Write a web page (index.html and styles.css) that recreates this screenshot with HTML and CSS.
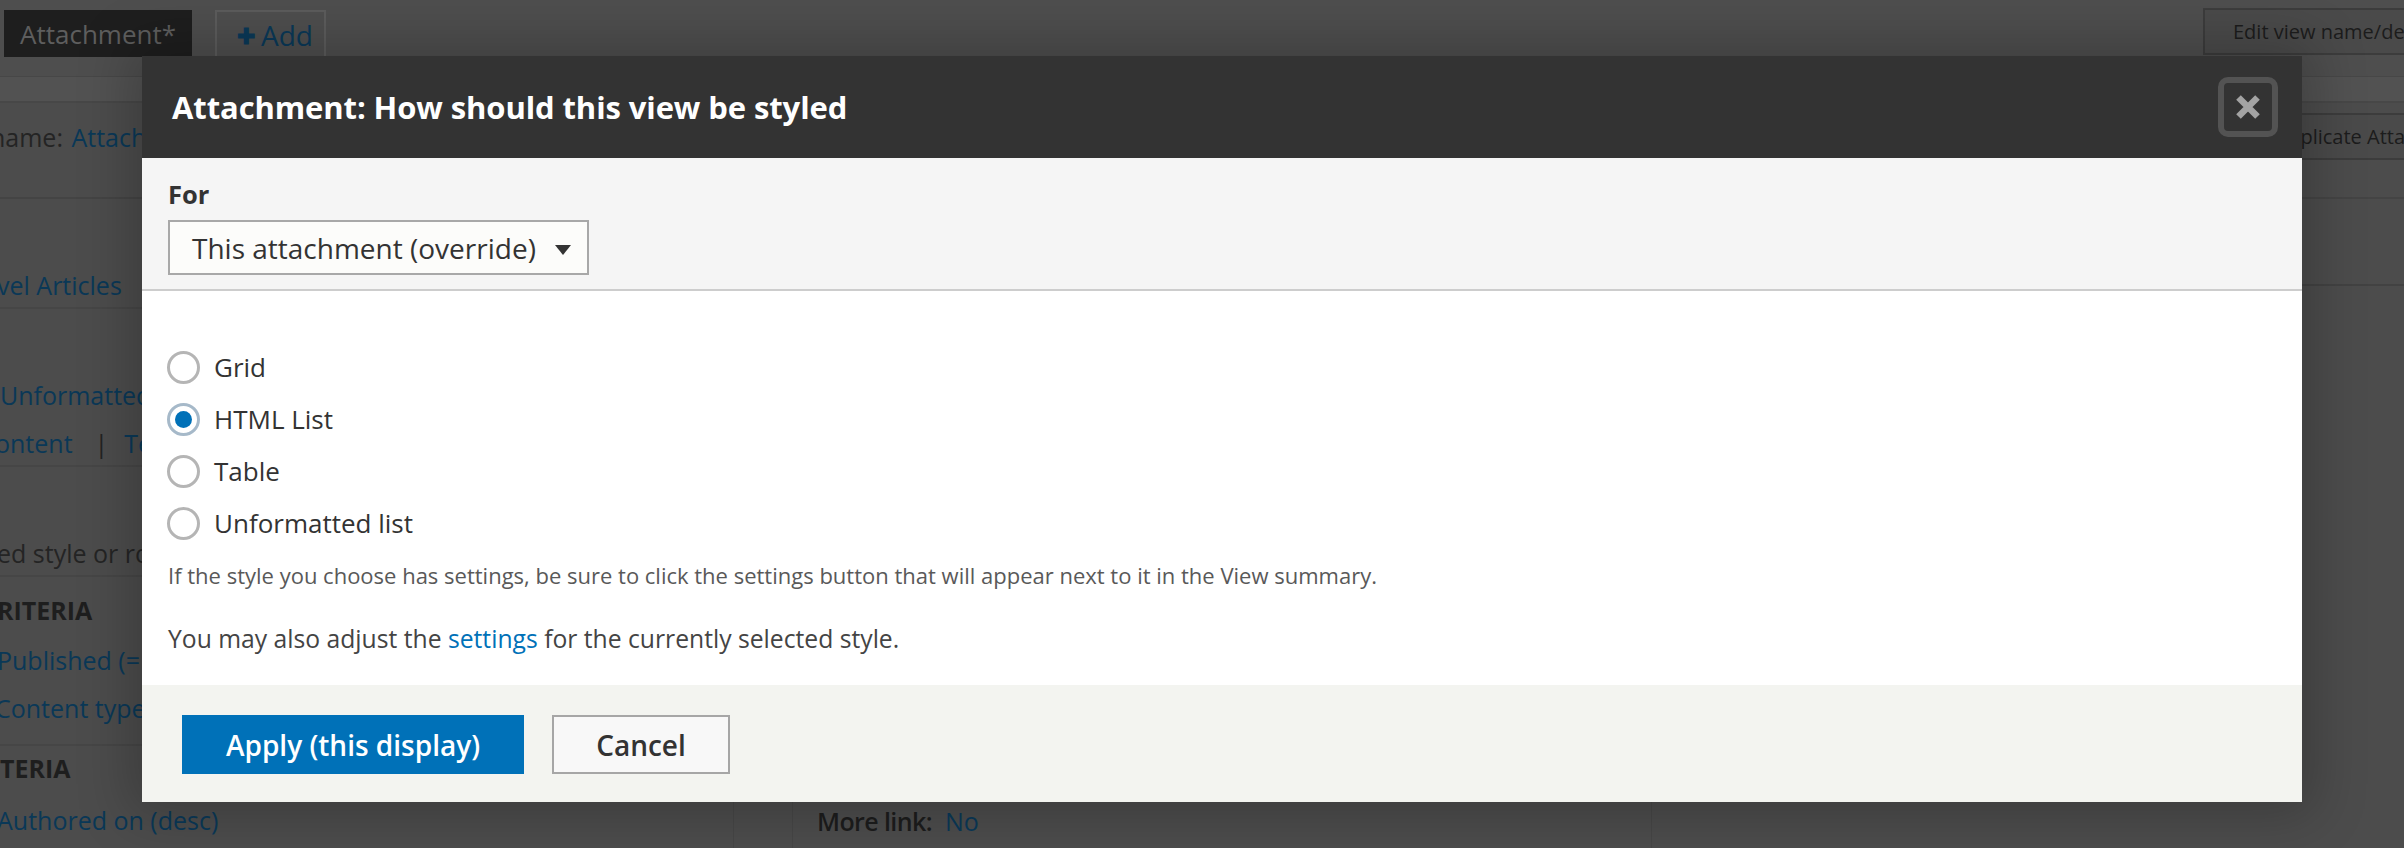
FILE: index.html
```html
<!DOCTYPE html>
<html lang="en">
<head>
<meta charset="utf-8">
<title>Attachment: How should this view be styled</title>
<link rel="stylesheet" href="styles.css">
</head>
<body>
<div class="page">
  <div class="topbar">
    <div class="tabs">
      <span class="tab tab-active">Attachment*</span>
      <span class="tab tab-add"><span class="plus">&#10010;</span>Add</span>
    </div>
    <span class="bg-button bg-edit">Edit view name/description</span>
  </div>
  <div class="subbar"></div>
  <div class="display-row">
    <div class="display-name"><span class="txt cut-name">name:</span> <span class="lnk name-link">Attachment</span></div>
    <span class="bg-button bg-dup">Duplicate Attachment</span>
  </div>
  <div class="columns">
    <div class="col col-left">
      <div class="sec sec-title"><div class="line"><span class="lnk cut-1">vel Articles</span></div></div>
      <div class="sec sec-format">
        <div class="line"><span class="lnk">Unformatted list</span></div>
        <div class="line"><span class="lnk cut-2">ontent</span><span class="pipe">|</span><span class="lnk">Teaser</span></div>
      </div>
      <div class="sec sec-fields"><div class="line"><span class="txt cut-1">ed style or row format does not use fields.</span></div></div>
      <div class="sec sec-filter">
        <div class="line head"><span class="lbl cut-1">RITERIA</span></div>
        <div class="line"><span class="lnk cut-1">Published (= Yes)</span></div>
        <div class="line"><span class="lnk cut-2">Content type (= Article)</span></div>
      </div>
      <div class="sec sec-sort">
        <div class="line head"><span class="lbl">TERIA</span></div>
        <div class="line"><span class="lnk cut-1">Authored on (desc)</span></div>
      </div>
    </div>
    <div class="col col-mid">
      <div class="mid-spacer"></div>
      <div class="line more"><span class="txt more-label">More link:</span>&nbsp; <span class="lnk">No</span></div>
    </div>
    <div class="col col-right">
      <div class="right-row"></div>
    </div>
  </div>
</div>

<div class="dialog" role="dialog">
  <div class="dialog-titlebar">
    <span class="dialog-title">Attachment: How should this view be styled</span>
    <button class="dialog-close" aria-label="Close">
      <svg width="26" height="26" viewBox="0 0 26 26"><path d="M3.5 3.5 L22.5 22.5 M22.5 3.5 L3.5 22.5" stroke="#a3a3a3" stroke-width="6.5" fill="none"/></svg>
    </button>
  </div>
  <div class="for-section">
    <div class="for-label">For</div>
    <div class="select"><span>This attachment (override)</span><span class="arrow"></span></div>
  </div>
  <div class="dialog-body">
    <div class="radios">
      <div class="radio"><span class="circle"></span><span>Grid</span></div>
      <div class="radio"><span class="circle checked"></span><span>HTML List</span></div>
      <div class="radio"><span class="circle"></span><span>Table</span></div>
      <div class="radio"><span class="circle"></span><span>Unformatted list</span></div>
    </div>
    <div class="description">If the style you choose has settings, be sure to click the settings button that will appear next to it in the View summary.</div>
    <p class="note">You may also adjust the <a class="link" href="#">settings</a> for the currently selected style.</p>
  </div>
  <div class="dialog-footer">
    <button class="btn btn-primary">Apply (this display)</button>
    <button class="btn btn-secondary">Cancel</button>
  </div>
</div>
</body>
</html>
```
FILE: styles.css
```css
html, body {
  margin: 0;
  padding: 0;
}
body {
  width: 2404px;
  height: 848px;
  overflow: hidden;
  background: #4c4c4c;
  font-family: "Open Sans", "Noto Sans", sans-serif;
  position: relative;
}

/* ---------- background page (under overlay) ---------- */
.page {
  width: 2404px;
  height: 848px;
  overflow: hidden;
  font-size: 25px;
  color: #262626;
}
.lnk { color: #0a3857; }
.lbl { font-weight: 700; color: #1e1e1e; }
.txt { color: #242424; }
.more-label { color: #1c1c1c; font-weight: 600; letter-spacing: -0.6px; }

.topbar {
  height: 76px;
  display: flex;
  justify-content: space-between;
  align-items: flex-start;
  border-bottom: 1px solid #474747;
  background: #4e4e4e;
}
.tabs {
  display: flex;
  gap: 23px;
  padding: 10px 0 0 4px;
}
.tab {
  height: 47px;
  box-sizing: border-box;
  display: flex;
  align-items: center;
}
.tab-active {
  width: 188px;
  background: #1e1e1e;
  color: #5e5e5e;
  padding-left: 16px;
  font-size: 26px;
}
.tab-add {
  width: 111px;
  border: 2px solid #5c5c5c;
  border-bottom: none;
  padding-left: 20px;
  color: #0a3857;
  font-size: 28px;
}
.plus {
  font-size: 22px;
  margin-right: 6px;
  color: #0a3857;
  font-weight: 700;
}
.bg-button {
  display: inline-flex;
  align-items: center;
  height: 47px;
  box-sizing: border-box;
  border: 2px solid #3c3c3c;
  background: #4a4a4a;
  color: #1c1c1c;
  font-size: 20px;
  padding: 0 28px;
  white-space: nowrap;
}
.bg-edit {
  margin-top: 8px;
  flex: none;
  width: 320px;
  margin-right: -119px;
}
.subbar {
  height: 24px;
  background: #525252;
  border-bottom: 2px solid #474747;
}
.display-row {
  height: 96px;
  display: flex;
  justify-content: space-between;
  align-items: flex-start;
  border-bottom: 2px solid #444;
  box-sizing: border-box;
}
.display-name {
  margin-top: 16px;
  line-height: 36px;
  white-space: nowrap;
}
.cut-name { margin-left: -10px; }
.name-link { margin-left: 2px; }
.bg-dup {
  margin-top: 10px;
  margin-right: -102px;
}

.columns {
  display: flex;
  height: 700px;
}
.col-left {
  width: 733px;
  border-right: 1px solid #464646;
  flex: none;
  white-space: nowrap;
  overflow: hidden;
}
.col-mid {
  margin-left: 58px;
  width: 858px;
  border-left: 1px solid #464646;
  border-right: 1px solid #464646;
  flex: none;
}
.col-right {
  flex: 1;
}
.right-row {
  height: 85px;
  border-bottom: 2px solid #424242;
  margin-left: 600px;
}
.sec {
  border-bottom: 2px solid #464646;
  box-sizing: border-box;
}
.line {
  line-height: 48px;
  white-space: nowrap;
}
.sec-title { height: 110px; padding-top: 62px; }
.sec-format { height: 158px; padding-top: 62px; }
.sec-fields { height: 110px; padding-top: 62px; }
.sec-filter { height: 169px; padding-top: 7px; }
.sec-filter .line.head { line-height: 52px; }
.sec-sort { border-bottom: none; }
.sec-sort .line.head { line-height: 44px; margin-bottom: 6px; }
.cut-1 { margin-left: -3px; }
.cut-2 { margin-left: -5px; }
.pipe { color: #222; margin: 0 16px 0 22px; }
.mid-spacer { height: 598px; }
.more { padding-left: 24px; }

/* ---------- dialog ---------- */
.dialog {
  position: absolute;
  left: 142px;
  top: 56px;
  width: 2160px;
  height: 746px;
  background: #fff;
  display: flex;
  flex-direction: column;
  box-shadow: 0 0 50px 12px rgba(0, 0, 0, 0.22);
  color: #333;
}
.dialog-titlebar {
  height: 102px;
  flex: none;
  background: #333;
  display: flex;
  align-items: center;
  justify-content: space-between;
  padding: 0 24px 0 30px;
}
.dialog-title {
  color: #fff;
  font-weight: 700;
  font-size: 31px;
  letter-spacing: -0.1px;
}
.dialog-close {
  width: 60px;
  height: 60px;
  box-sizing: border-box;
  border: 6px solid #535353;
  border-radius: 10px;
  background: #333;
  padding: 0;
  display: flex;
  align-items: center;
  justify-content: center;
}
.for-section {
  background: #f5f5f5;
  padding: 20px 26px 14px;
  border-bottom: 2px solid #cdcdcd;
  flex: none;
}
.for-label {
  font-weight: 700;
  font-size: 25.5px;
  line-height: 32px;
  margin-bottom: 10px;
}
.select {
  width: 421px;
  height: 55px;
  box-sizing: border-box;
  border: 2px solid #a8a8a8;
  background: #fcfcfa;
  display: flex;
  align-items: center;
  justify-content: space-between;
  padding: 0 16px 0 22px;
  font-size: 28px;
  color: #333;
}
.arrow {
  width: 0;
  height: 0;
  border-left: 8px solid transparent;
  border-right: 8px solid transparent;
  border-top: 10px solid #333;
  margin-top: 4px;
}
.dialog-body {
  flex: 1;
  padding: 50px 26px 0;
}
.radios {
  display: flex;
  flex-direction: column;
}
.radio {
  height: 52px;
  display: flex;
  align-items: center;
  font-size: 26px;
  color: #333;
}
.circle {
  width: 33px;
  height: 33px;
  box-sizing: border-box;
  border: 3px solid #b5b5b5;
  border-radius: 50%;
  margin: 0 14px 0 -1px;
  background: #fff;
  position: relative;
  flex: none;
}
.circle.checked {
  border-color: #a6b9c9;
}
.circle.checked::after {
  content: "";
  position: absolute;
  left: 5px;
  top: 5px;
  width: 17px;
  height: 17px;
  border-radius: 50%;
  background: #0071b8;
}
.description {
  margin-top: 11px;
  font-size: 22px;
  line-height: 30px;
  color: #595959;
}
.note {
  margin: 31px 0 0;
  font-size: 24.7px;
  line-height: 36px;
  color: #444;
}
.link {
  color: #0071b8;
  text-decoration: none;
}
.dialog-footer {
  height: 117px;
  flex: none;
  box-sizing: border-box;
  background: #f3f4f0;
  padding: 30px 40px;
  display: flex;
  gap: 28px;
  align-items: flex-start;
}
.btn {
  height: 59px;
  box-sizing: border-box;
  font-family: "Open Sans", "Noto Sans", sans-serif;
  font-weight: 600;
  font-size: 28px;
  padding: 0;
  margin: 0;
}
.btn-primary {
  width: 342px;
  background: #0071b8;
  border: 2px solid #0071b8;
  color: #fff;
}
.btn-secondary {
  width: 178px;
  background: #f8f8f8;
  border: 2px solid #a6a6a6;
  color: #333;
}
```
